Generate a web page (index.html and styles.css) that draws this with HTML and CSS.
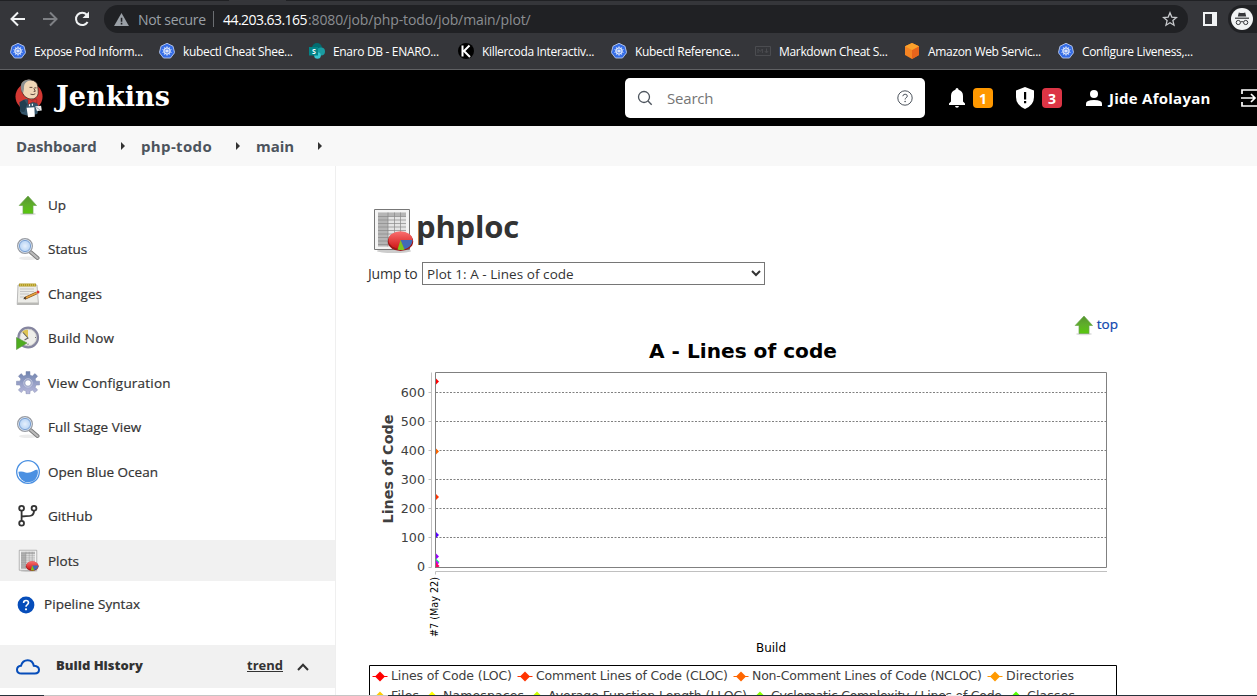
FILE: index.html
```html
<!DOCTYPE html>
<html lang="en">
<head>
<meta charset="utf-8">
<title>phploc [Jenkins]</title>
<link rel="stylesheet" href="styles.css">
</head>
<body>
<svg class="defs" width="0" height="0" aria-hidden="true">
  <defs>
    <linearGradient id="green" x1="0" y1="0" x2="0" y2="1"><stop offset="0" stop-color="#55942f"/><stop offset=".5" stop-color="#5fae2a"/><stop offset="1" stop-color="#58c80c"/></linearGradient>
    <radialGradient id="lens"><stop offset="0" stop-color="#e6f0fc"/><stop offset="1" stop-color="#a9cbf3"/></radialGradient>
    <linearGradient id="gear" x1="0" y1="0" x2="0" y2="1"><stop offset="0" stop-color="#6f83ae"/><stop offset="1" stop-color="#b9b9dc"/></linearGradient>
    <linearGradient id="red" x1="0" y1="0" x2="0" y2="1"><stop offset="0" stop-color="#fa7070"/><stop offset="1" stop-color="#cf1717"/></linearGradient>
    <symbol id="up" viewBox="0 0 24 24">
      <ellipse cx="12" cy="21" rx="8" ry="1.3" fill="#ddd"/>
      <path d="M12 3 20.5 12.5H17V20.5H7V12.5H3.2Z" fill="url(#green)" stroke="#6fa651" stroke-width=".7"/>
    </symbol>
    <symbol id="magnifier" viewBox="0 0 24 24">
      <ellipse cx="12" cy="21.3" rx="9" ry="1.8" fill="#ececec"/>
      <path d="m14.500 15 7 6" stroke="#777" stroke-width="4" stroke-linecap="round"/>
      <path d="m14.500 15 7 6" stroke="#bbb" stroke-width="2.300" stroke-linecap="round"/>
      <circle cx="9" cy="9" r="7.300" fill="url(#lens)" stroke="#999ca3" stroke-width="1.400"/>
      <circle cx="9" cy="9" r="6.200" fill="none" stroke="#e9edf2" stroke-width="1"/>
      <circle cx="9" cy="9" r="5.600" fill="none" stroke="#6691c9" stroke-width=".8"/>
    </symbol>
    <symbol id="notepad" viewBox="0 0 24 24">
      <path d="M2 3H21L22.500 22.500H1.200Z" fill="#ecece8" stroke="#aaa" stroke-width=".8"/>
      <path d="M1.400 20.500H22.300V22.500H1.200Z" fill="#b9b9b5"/>
      <path d="M3 1.500H20V4.500H3Z" fill="#b39b26"/>
      <path d="M4 3H19" stroke="#e7d87d" stroke-dasharray="1 1"/>
      <path d="M4 7H18M4 9.500H18M4 12H13M4 15H8" stroke="#c5c5c5"/>
      <path d="m8.500 16.500 12-5.500" stroke="#7d4c16" stroke-width="2.600"/>
      <path d="m9 16.200 12-5.500" stroke="#e8a340" stroke-width="1.500"/>
      <path d="m7 17.300 2.500-2.500.8 1.700Z" fill="#333"/>
      <circle cx="22" cy="10" r="1.500" fill="#d33"/>
    </symbol>
    <symbol id="clock" viewBox="0 0 24 24">
      <circle cx="12.200" cy="11.500" r="9.700" fill="#eeeeea" stroke="#85859f" stroke-width="2.400"/>
      <circle cx="12.200" cy="11.500" r="8.300" fill="none" stroke="#c9c9c6" stroke-width=".8"/>
      <path d="m12 12-6-6q3-3 6-2Z" fill="#dfc452"/>
      <path d="M7 6.500 12 12 8.500 14" fill="none" stroke="#666" stroke-width="1.100"/>
      <path d="M19 11.500h1M12 17.500v1.500" stroke="#777"/>
      <path d="M.5 11.500 11 17 .5 23.500Z" fill="#4ead20" stroke="#5a9141" stroke-width=".6"/>
    </symbol>
    <symbol id="cog" viewBox="0 0 24 24">
      <g fill="url(#gear)" stroke="#7f89af" stroke-width=".5">
        <path fill-rule="evenodd" d="M10 .5h4v3.600l2.300 1L19 2.600l2.600 2.700-2.500 2.600 1 2.300h3.400v3.800h-3.400l-1 2.300 2.500 2.600-2.700 2.700-2.600-2.500-2.300 1v2.600h-4v-2.600l-2.300-1-2.600 2.500-2.700-2.700 2.500-2.600-1-2.300H.5v-3.800h3.400l1-2.300L2.400 5.300 5.100 2.600l2.600 2.500 2.300-1ZM12 8.900a3.100 3.100 0 1 0 0 6.200 3.100 3.100 0 1 0 0-6.200Z"/>
      </g>
      <circle cx="12" cy="12" r="4.200" fill="none" stroke="#c3c8de"/>
    </symbol>
    <symbol id="ocean" viewBox="0 0 24 24">
      <circle cx="12" cy="12" r="11.300" fill="#fff" stroke="#4a90e2" stroke-width="1.300"/>
      <path d="M2.500 11.800q3.500-.7 7 .6 4 1 8-1.500 2-1.400 4-1.100a9.700 9.700 0 1 1-19 2Z" fill="#4a90e2"/>
    </symbol>
    <symbol id="branch" viewBox="0 0 24 24">
      <g fill="none" stroke="#333" stroke-width="1.800">
        <circle cx="5.600" cy="4.300" r="2.400"/><circle cx="18" cy="4.300" r="2.400"/><circle cx="5.600" cy="19.200" r="2.400"/>
        <path d="M5.600 6.700V16.800M18 6.700C18 14 11 11.500 5.600 12.500"/>
      </g>
    </symbol>
    <symbol id="plot" viewBox="0 0 48 48">
      <ellipse cx="26" cy="44" rx="17" ry="2" fill="#ccc"/>
      <path d="M6.500 2.500h35v40h-35Z" fill="#f4f4f4" stroke="#777"/>
      <path d="M10 5.500h28v34h-28Z" fill="#e4e4e4"/>
      <path d="M10 5.500h28v4H20v30H10Z" fill="#b5b5b5"/>
      <path d="M10 9.500h28M10 13h28M10 16.500h28M10 20h28M10 23.500h28M10 27h28M10 30.500h28M10 34h28M10 37.500h28M20 5.500v34M26.500 5.500v34M32.500 5.500v34" stroke="#888" stroke-width=".7" fill="none"/>
      <ellipse cx="32.500" cy="34.500" rx="12.700" ry="9.500" fill="#9d1717"/>
      <ellipse cx="32.500" cy="33" rx="12" ry="8.700" fill="url(#red)"/>
      <path d="m32.500 33 3.500 9.500q8-2 8.500-9.500Z" fill="#426bb5"/>
      <path d="m32.500 33-3 9.500q4 1 7 0Z" fill="#7fc51d"/>
    </symbol>
    <symbol id="helm" viewBox="0 0 16 16">
      <path d="M8 .3 14 3.200 15.600 9.700 11.500 15H4.500L.4 9.700 2 3.200Z" fill="#356de6" stroke="#b9c9ee" stroke-width=".9"/>
      <g stroke="#fff" fill="none"><circle cx="8" cy="8" r="3.200" stroke-width=".9"/><path d="M8 3v10M3.300 6.500l9.400 3M12.700 6.500l-9.400 3M5 12l6-8M11 12 5 4" stroke-width=".55"/></g>
    </symbol>
  </defs>
</svg>

<div class="browser">
  <div class="tabstrip"></div>
  <div class="toolbar">
    <svg class="nav" viewBox="0 0 20 20"><path d="M17 10H4M10 3.500 3.500 10l6.500 6.500" fill="none" stroke="#f1f3f4" stroke-width="2"/></svg>
    <svg class="nav" viewBox="0 0 20 20"><path d="M3 10h13M10 3.500l6.500 6.500-6.500 6.500" fill="none" stroke="#7e8084" stroke-width="2"/></svg>
    <svg class="nav" viewBox="0 0 20 20"><path d="M15.600 13A6.200 6.200 0 1 1 14.800 5.700" fill="none" stroke="#f1f3f4" stroke-width="2"/><path d="M17 2.500V9h-6.500Z" fill="#f1f3f4"/></svg>
    <div class="omnibox">
      <svg class="warn" viewBox="0 0 16 14"><path d="M8 0 16 14H0Z" fill="#9aa0a6"/><path d="M7.200 5h1.700v4.300H7.200ZM7.200 10.600h1.700v1.700H7.200Z" fill="#202124"/></svg>
      <span class="insecure">Not secure</span><span class="divider"></span>
      <span class="host">44.203.63.165</span><span class="path">:8080/job/php-todo/job/main/plot/</span>
      <svg class="star" viewBox="0 0 16 16"><path d="m8 1.800 1.800 4.300 4.700.4-3.600 3.100 1.100 4.600L8 11.800l-4 2.400 1.100-4.600L1.500 6.500l4.700-.4Z" fill="none" stroke="#c8cacd" stroke-width="1.300"/></svg>
    </div>
    <svg class="panel" viewBox="0 0 14 14"><path fill-rule="evenodd" d="M0 0h14v14H0ZM2 2v10h7V2Z" fill="#f1f3f4"/></svg>
    <div class="incognito"><svg viewBox="0 0 22 22"><circle cx="11" cy="11" r="11" fill="#f1f3f4"/><path d="M7.800 4.500q3.200 1 6.400 0l1 4H6.800Z" fill="#35363a"/><path d="M4 10.200h14" stroke="#35363a" stroke-width="1.200"/><g fill="none" stroke="#35363a" stroke-width="1"><circle cx="7.300" cy="14.500" r="2.100"/><circle cx="14.700" cy="14.500" r="2.100"/><path d="M9.400 14q1.600-.8 3.200 0"/></g></svg></div>
  </div>
  <div class="bookmarks">
    <a><svg><use href="#helm"/></svg><span>Expose Pod Inform...</span></a>
    <a><svg><use href="#helm"/></svg><span>kubectl Cheat Shee...</span></a>
    <a><svg viewBox="0 0 16 16"><circle cx="8" cy="5" r="5" fill="#036c70"/><circle cx="12" cy="8.500" r="4" fill="#1a9ba1"/><circle cx="8.500" cy="12.500" r="3.300" fill="#37c6d0"/><path d="M0 4h9v8.500H0Z" fill="#038387"/><text x="4.700" y="11" class="fav-s">S</text></svg><span>Enaro DB - ENARO...</span></a>
    <a><svg viewBox="0 0 16 16"><circle cx="8" cy="8" r="8" fill="#000"/><path d="M4.500 2.500v11M11.500 2.500 6 8l6 6" fill="none" stroke="#fff" stroke-width="2"/></svg><span>Killercoda Interactiv...</span></a>
    <a><svg><use href="#helm"/></svg><span>Kubectl Reference...</span></a>
    <a><svg viewBox="0 0 16 16"><path d="M.5 3.500h15v9H.5ZM3 10V6l2.200 2.500L7.400 6v4M11.500 5.500v4M9.800 8l1.700 2 1.700-2" fill="none" stroke="#4b4c50"/></svg><span>Markdown Cheat S...</span></a>
    <a><svg viewBox="0 0 16 16"><path d="m8 0 7 3.200V12l-7 4-7-4V3.200Z" fill="#f58423"/><path d="m8 7 7-3.800V12l-7 4Z" fill="#e7641c"/><path d="m1 3.200 7-3.200 7 3.200L8 7Z" fill="#fba12b"/></svg><span>Amazon Web Servic...</span></a>
    <a><svg><use href="#helm"/></svg><span>Configure Liveness,...</span></a>
  </div>
</div>

<header class="header">
  <svg class="butler" viewBox="0 0 30 40">
    <circle cx="14.500" cy="18" r="14" fill="#d33833"/>
    <path d="M5 33 6 24l5-3.500 11 2.500 3 6-2 7-9 2-7-2Z" fill="#35566b"/>
    <path d="M5.500 33.500 4.500 24l5-3 3 5-3 8Z" fill="#223f51"/>
    <path d="M7 4Q10 0 16 .8q7 .7 7.500 6.500l.5 5q.5 6-4.500 8-5.500 1.500-9.500-2.500Q5 12 7 4Z" fill="#f0d6b7" stroke="#2b211e" stroke-width=".7"/>
    <path d="M7 13Q4.500 6 8 3q4-4 10-2-6 0-8 4-1 2-.7 5L8.500 14Z" fill="#8b8f91"/>
    <path d="M15 8.500h3M20 9h2.200M16 15.500q3 1.300 5-.4M19.500 9.500l1.500 3-1.700.3" fill="none" stroke="#4b342b" stroke-width=".9"/>
    <path d="m13.500 20 4 2 5-1.500v4.500l-4-1.500-5 2.500Z" fill="#d33833" stroke="#7e1c1b" stroke-width=".4"/>
    <path d="M15 26v2M18 25.500v2" stroke="#fff" stroke-width="1.200"/>
    <path d="m12 29.500 8-.5.500 10-7 .5Z" fill="#fff"/>
    <path d="m21 28 6-.5.700 5-5 .5Z" fill="#edeff0"/>
    <path d="m22 29 4 3" stroke="#567" stroke-width=".6"/>
  </svg>
  <span class="wordmark">Jenkins</span>
  <div class="search">
    <svg class="glass" viewBox="0 0 16 16"><circle cx="7" cy="7" r="5.500" fill="none" stroke="#4d545d" stroke-width="1.300"/><path d="m11 11 3.700 3.700" stroke="#4d545d" stroke-width="1.400"/></svg>
    <span class="placeholder">Search</span>
    <svg class="hint" viewBox="0 0 16 16"><circle cx="8" cy="8" r="7.200" fill="none" stroke="#4d545d"/><path d="M5.800 6.200q.3-2 2.300-2 2.200 0 2.200 1.900 0 1-1.200 1.700-1 .6-1 1.700" fill="none" stroke="#4d545d"/><circle cx="8.100" cy="11.500" r=".8" fill="#4d545d"/></svg>
  </div>
  <svg class="bell" viewBox="0 0 16 20"><path d="M8 0q1.400 0 1.600 1.800Q14 3.200 14 8v5.500l2 2V17H0v-1.500l2-2V8q0-4.800 4.400-6.200Q6.600 0 8 0ZM6 18h4q-.3 1.800-2 1.800T6 18Z" fill="#fff"/></svg>
  <span class="badge amber">1</span>
  <svg class="shield" viewBox="0 0 18 22"><path d="m9 0 9 3.500V10q0 8-9 12-9-4-9-12V3.500Z" fill="#fff"/><path d="M8 5h2.200v7.500H8ZM8 14h2.200v2.200H8Z" fill="#000"/></svg>
  <span class="badge crimson">3</span>
  <svg class="person" viewBox="0 0 16 16"><circle cx="8" cy="4" r="4" fill="#fff"/><path d="M0 16v-2.500Q0 10 8 10t8 3.500V16Z" fill="#fff"/></svg>
  <span class="user">Jide Afolayan</span>
  <svg class="logout" viewBox="0 0 20 18"><path d="M1 5V1h18v16H1v-4M0 9h13M10 5l4 4-4 4" fill="none" stroke="#fff" stroke-width="1.700"/></svg>
</header>

<nav class="crumbs">
  <a class="c1">Dashboard</a><i></i><a class="c2">php-todo</a><i></i><a class="c3">main</a><i></i>
</nav>

<div class="page">
  <aside class="sidebar">
    <div class="tasks">
      <a><svg><use href="#up"/></svg><span>Up</span></a>
      <a><svg><use href="#magnifier"/></svg><span>Status</span></a>
      <a><svg><use href="#notepad"/></svg><span>Changes</span></a>
      <a><svg><use href="#clock"/></svg><span class="wide">Build Now</span></a>
      <a><svg><use href="#cog"/></svg><span class="wide">View Configuration</span></a>
      <a><svg><use href="#magnifier"/></svg><span>Full Stage View</span></a>
      <a><svg><use href="#ocean"/></svg><span>Open Blue Ocean</span></a>
      <a><svg><use href="#branch"/></svg><span>GitHub</span></a>
      <a class="active"><svg><use href="#plot"/></svg><span>Plots</span></a>
      <a class="small"><svg viewBox="0 0 18 18"><circle cx="9" cy="9" r="8.400" fill="#064dba"/><path d="M6.600 7q0-2.500 2.400-2.500T11.500 6.700q0 1-1.200 1.900Q9 9.500 9 10.800" fill="none" stroke="#fff" stroke-width="1.600"/><circle cx="9" cy="13.300" r="1.100" fill="#fff"/></svg><span>Pipeline Syntax</span></a>
    </div>
    <div class="history">
      <svg class="cloud" viewBox="0 0 24 16"><path d="M5.500 14.500Q1 14.500 1 10.700 1 7.200 5 6.800 6.500 1.200 11.700 1.200q5 0 6.100 5.600Q23 7.200 23 10.800q0 3.700-4.200 3.700Z" fill="none" stroke="#064dba" stroke-width="2"/></svg>
      <b>Build History</b><a>trend</a>
      <svg class="chev" viewBox="0 0 12 8"><path d="m1 7 5-5.300L11 7" fill="none" stroke="#333" stroke-width="2"/></svg>
    </div>
  </aside>

  <main class="main">
    <h1><svg><use href="#plot"/></svg><span>phploc</span></h1>
    <div class="jump"><span>Jump to</span><select><option>Plot 1: A - Lines of code</option></select></div>
    <div class="top"><svg><use href="#up"/></svg><a>top</a></div>
    <svg class="chart" viewBox="368 336 750 360" width="750" height="360">
      <defs><path id="d" d="M0-5 5 0 0 5-5 0Z"/><clipPath id="plotclip"><path d="M435 372h672v196H435Z"/></clipPath></defs>
      <text x="649" y="358" textLength="188" lengthAdjust="spacingAndGlyphs" class="title">A - Lines of code</text>
      <path d="M431.500 372.500v195M435.500 571.500H1107M428.500 392.500h3M428.500 421.500h3M428.500 450.500h3M428.500 479.500h3M428.500 508.500h3M428.500 537.500h3M428.500 567.500h3M435.500 571.500v3" class="axis"/>
      <path d="M436 392.500H1106M436 421.500H1106M436 450.500H1106M436 479.500H1106M436 508.500H1106M436 537.500H1106" class="grid"/>
      <g clip-path="url(#plotclip)">
        <use href="#d" x="434" y="381.500" fill="#f00"/><use href="#d" x="434" y="451.500" fill="#f60"/><use href="#d" x="434" y="497" fill="#f30"/><use href="#d" x="434" y="535" fill="#50f"/><use href="#d" x="434" y="556.500" fill="#90f"/><use href="#d" x="434.500" y="562" fill="#0f8"/><use href="#d" x="434" y="563" fill="#c0f"/><use href="#d" x="434.500" y="566" fill="#f06"/>
      </g>
      <path d="M435.500 372.500H1106.500V567.500H435.500Z" class="frame"/>
      <g class="ticks"><text x="425" y="397">600</text><text x="425" y="426">500</text><text x="425" y="455">400</text><text x="425" y="484">300</text><text x="425" y="513">200</text><text x="425" y="542">100</text><text x="425" y="571">0</text></g>
      <text transform="translate(393 523.500) rotate(-90)" textLength="109" lengthAdjust="spacingAndGlyphs" class="ylabel">Lines of Code</text>
      <text transform="translate(438 637) rotate(-90)" textLength="60" lengthAdjust="spacingAndGlyphs" class="date">#7 (May 22)</text>
      <text x="756" y="652" textLength="30" lengthAdjust="spacingAndGlyphs" class="build">Build</text>
      <path d="M369.500 700V665.500H1116.500V700" fill="none" stroke="#000"/>
      <g class="marks">
        <path d="M372.500 676.500h15" stroke="#f00"/><use href="#d" x="380" y="676.500" fill="#f00"/>
        <path d="M517.500 676.500h15" stroke="#f30"/><use href="#d" x="525" y="676.500" fill="#f30"/>
        <path d="M733.500 676.500h15" stroke="#f60"/><use href="#d" x="741" y="676.500" fill="#f60"/>
        <path d="M987.500 676.500h15" stroke="#f90"/><use href="#d" x="995" y="676.500" fill="#f90"/>
        <use href="#d" x="380" y="696.500" fill="#fc0"/><use href="#d" x="432" y="696.500" fill="#ff0"/><use href="#d" x="537" y="696.500" fill="#cf0"/><use href="#d" x="760" y="696.500" fill="#8f0"/><use href="#d" x="1016" y="696.500" fill="#5f0"/>
      </g>
      <g class="legend">
        <text x="391" y="680" textLength="121">Lines of Code (LOC)</text><text x="536" y="680" textLength="192">Comment Lines of Code (CLOC)</text><text x="752" y="680" textLength="230">Non-Comment Lines of Code (NCLOC)</text><text x="1006" y="680" textLength="68">Directories</text>
        <text x="391" y="700" textLength="28">Files</text><text x="443" y="700" textLength="81">Namespaces</text><text x="548" y="700" textLength="199">Average Function Length (LLOC)</text><text x="771" y="700" textLength="231">Cyclomatic Complexity / Lines of Code</text><text x="1027" y="700" textLength="48">Classes</text>
      </g>
    </svg>
  </main>
</div>
<div class="taskbar"></div>
</body>
</html>
```

FILE: styles.css
```css
* { box-sizing: border-box; }
body { margin: 0; width: 1257px; height: 696px; overflow: hidden; position: relative; background: #fff; color: #333; font: 14px "Open Sans", "Noto Sans", sans-serif; }
svg { display: block; flex: none; }
span, a, b { white-space: nowrap; }
.defs { position: absolute; }

.browser { height: 70px; background: #35363a; border-bottom: 1px solid #5f6063; overflow: hidden; }
.tabstrip { height: 1px; background: linear-gradient(90deg, #202124 229px, #35363a 229px 286px, #202124 286px); }
.toolbar { display: flex; align-items: center; height: 36px; padding-left: 8px; }
.toolbar > *, .omnibox > *, .header > * { flex: none; }
.nav { width: 20px; height: 20px; margin-right: 12px; }
.omnibox { display: flex; align-items: center; width: 1084px; height: 28px; padding: 0 10px; border-radius: 14px; background: #202124; color: #8b8e92; font-size: 14px; }
.warn { width: 15px; height: 13px; }
.insecure { width: 67px; margin-left: 9px; color: #9aa0a6; letter-spacing: -.32px; }
.divider { width: 1px; height: 16px; margin: 0 9px 0 8px; background: #6b6e72; }
.host { color: #fff; width: 85px; letter-spacing: -.55px; }
.path { letter-spacing: -.12px; }
.star { width: 16px; height: 16px; margin-left: auto; }
.panel { width: 14px; height: 14px; margin-left: 15px; }
.incognito { width: 40px; height: 28px; margin-left: 11px; padding: 3px; background: #202124; border-radius: 14px 0 0 14px; }
.incognito svg { width: 22px; height: 22px; }
.bookmarks { display: grid; grid-template-columns: 149px 150px 149px 153px 144px 149px 154px 180px; height: 28px; padding-left: 10px; color: #fff; font-size: 12px; letter-spacing: -.33px; }
.bookmarks a { display: flex; align-items: center; gap: 8px; }
.bookmarks svg { width: 16px; height: 16px; }
.fav-s { fill: #fff; font: bold 7px "Open Sans", sans-serif; text-anchor: middle; }

.header { display: flex; align-items: center; height: 56px; padding-left: 15px; background: #000; color: #fff; overflow: hidden; }
.butler { width: 29px; height: 39px; }
.wordmark { width: 118px; margin: -3px 0 0 12px; font: bold 27px "DejaVu Serif", serif; letter-spacing: .1px; }
.search { display: flex; align-items: center; width: 300px; height: 40px; margin-left: 451px; padding: 0 12px; border-radius: 5px; background: #fff; color: #757575; font-size: 15px; }
.glass { width: 16px; height: 16px; }
.placeholder { margin-left: 14px; letter-spacing: -.2px; }
.hint { width: 16px; height: 16px; margin-left: auto; }
.bell { width: 16px; height: 20px; margin-left: 24px; }
.badge { display: grid; place-items: center; width: 20px; height: 20px; margin-left: 8px; border-radius: 4px; font-size: 14px; font-weight: 700; }
.amber { background: #ff9800; }
.crimson { background: #dc3545; }
.shield { width: 18px; height: 22px; margin-left: 23px; }
.person { width: 16px; height: 16px; margin-left: 24px; }
.user { width: 103px; margin-left: 7px; font-size: 15px; font-weight: 700; letter-spacing: 0.250px; }
.logout { width: 20px; height: 18px; margin-left: 29px; }

.crumbs { display: flex; align-items: center; height: 40px; padding-left: 16px; background: #f8f8f8; color: #4d545d; font-size: 15px; font-weight: 700; }
.crumbs i { width: 4px; height: 8px; background: #333; clip-path: polygon(0 0, 100% 50%, 0 100%); }
.crumbs a { margin-right: 24px; }
.crumbs i + a { margin-left: 16px; }
.c1 { width: 81px; letter-spacing: -.1px; }
.c2 { width: 71px; letter-spacing: .35px; }
.c3 { width: 38px; }

.page { display: flex; height: 530px; }
.sidebar { width: 336px; border-right: 1px solid #efefef; padding-top: 18px; }
.tasks { display: flex; flex-direction: column; gap: 4px; height: 461px; }
.tasks a { display: flex; align-items: center; gap: 8px; flex: none; height: 40.500px; padding-left: 16px; font-size: 13.500px; -webkit-text-stroke: .2px #333; }
.tasks svg { width: 24px; height: 24px; margin-top: 1px; }
.tasks span { margin-top: 1px; }
.tasks .wide { letter-spacing: .2px; }
.tasks .active { background: #f1f1f1; }
.tasks .small { padding-left: 17px; gap: 9px; }
.tasks .small svg { width: 18px; height: 18px; }
.tasks .small span { margin-top: -1px; letter-spacing: .05px; }
.history { display: flex; align-items: center; height: 43px; padding: 0 26px 2px 16px; background: #f1f1f1; font-size: 13px; font-weight: 700; }
.cloud { width: 24px; height: 16px; margin-top: 2px; }
.history b, .history a { margin-top: -1px; }
.history b { margin-left: 16px; }
.history a { margin-left: auto; text-decoration: underline; }
.chev { width: 12px; height: 8px; margin: 3px 0 0 14px; }

.main { width: 750px; margin-left: 32px; padding-top: 40px; }
h1 { display: flex; align-items: center; height: 48px; margin: 0; font-size: 31px; font-weight: 700; letter-spacing: -.2px; }
h1 svg { width: 48px; height: 48px; margin-top: 2px; }
h1 span { margin-top: -9px; }
.jump { display: flex; align-items: center; height: 23px; margin-top: 8px; font-size: 14px; letter-spacing: -.2px; }
.jump span { width: 54px; }
select { width: 343px; height: 23px; padding: 0; border: 1px solid #767676; border-radius: 0; background: #fff; color: #333; font: 13.500px "Open Sans", sans-serif; letter-spacing: .05px; }
.top { display: flex; justify-content: flex-end; align-items: center; height: 24px; margin-top: 27px; color: #0b45ad; font-size: 13.500px; -webkit-text-stroke: .2px #0b45ad; }
.top svg { width: 24px; height: 24px; margin: 2px 1px 0 0; }
.chart { font-family: "DejaVu Sans", sans-serif; }
.title { font-size: 20px; font-weight: 700; }
.axis { fill: none; stroke: #c0c0c0; }
.grid { stroke: #808080; stroke-dasharray: 2 1.500; fill: none; }
.frame { stroke: #808080; fill: none; }
.ticks { font-size: 12.700px; text-anchor: end; fill: #404040; }
.ylabel { font-size: 14px; font-weight: 700; fill: #404040; }
.date { font-size: 10px; }
.build { font-size: 12px; }
.legend { font-size: 12.500px; fill: #404040; }
.taskbar { position: absolute; left: 0; bottom: 0; width: 1257px; height: 1px; background: linear-gradient(90deg, #26323b 44px, #c5c5c5 44px 388px, #26323b 388px 946px, #eee 946px 963px, #26323b 963px); }
```
